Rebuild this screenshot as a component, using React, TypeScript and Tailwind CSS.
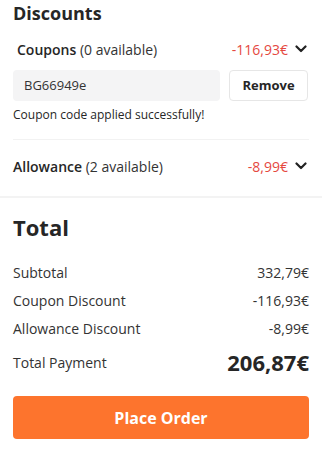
import React from "react";

function Chevron() {
  return (
    <svg width="12" height="8" viewBox="0 0 12 8" className="ml-[7px]">
      <path d="M1.5 1.5 L6 6 L10.5 1.5" fill="none" stroke="#222" strokeWidth="2.2" strokeLinecap="round" strokeLinejoin="round" />
    </svg>
  );
}

export default function App() {
  return (
    <div className="w-[322px] h-[452px] bg-white text-[#333] overflow-hidden" style={{ fontFamily: '"Open Sans", sans-serif' }}>
      <div className="px-[13px]">
        <div className="h-[26px] flex items-center text-[18px] font-bold text-[#262626]">Discounts</div>
        <div className="mt-[10px] h-[26px] flex items-center justify-between pl-[4px] pr-[2px]">
          <div className="text-[14px]"><span className="font-semibold text-[#262626]">Coupons</span> <span className="text-[#333]">(0 available)</span></div>
          <div className="flex items-center text-[14px] text-[#e5483f]">-116,93€<Chevron /></div>
        </div>
        <div className="mt-[8px] flex gap-[9px]">
          <div className="w-[207px] h-[31px] rounded-[4px] bg-[#f4f4f5] flex items-center pl-[11px] text-[13px] text-[#333]">BG66949e</div>
          <div className="w-[79px] h-[31px] rounded-[4px] border border-[#e6e6e6] flex items-center justify-center text-[13px] font-bold text-[#262626]">Remove</div>
        </div>
        <div className="mt-[5px] h-[18px] flex items-center text-[12px] text-[#262626]">Coupon code applied successfully!</div>
        <div className="mt-[15px] h-px bg-[#f2f2f2]" />
        <div className="pt-[16px] pb-[20px] h-[56px] flex items-center justify-between pr-[2px]">
          <div className="text-[14px]"><span className="font-semibold text-[#262626]">Allowance</span> <span className="text-[#333]">(2 available)</span></div>
          <div className="flex items-center text-[14px] text-[#e5483f]">-8,99€<Chevron /></div>
        </div>
      </div>
      <div className="h-[2px] bg-[#f3f3f3]" />
      <div className="px-[13px]">
        <div className="mt-[13px] h-[32px] flex items-center text-[22px] font-bold text-[#262626]">Total</div>
        <div className="mt-[15px] flex flex-col text-[14px] text-[#333]">
          <div className="h-[28px] flex items-center justify-between"><span>Subtotal</span><span>332,79€</span></div>
          <div className="h-[28px] flex items-center justify-between"><span>Coupon Discount</span><span>-116,93€</span></div>
          <div className="h-[28px] flex items-center justify-between"><span>Allowance Discount</span><span>-8,99€</span></div>
          <div className="h-[40px] flex items-center justify-between"><span>Total Payment</span><span className="text-[22px] font-bold text-[#262626]">206,87€</span></div>
        </div>
        <div className="mt-[14px] h-[43px] rounded-[4px] bg-[#fd742d] flex items-center justify-center text-white text-[16px] font-bold">Place Order</div>
      </div>
    </div>
  );
}
